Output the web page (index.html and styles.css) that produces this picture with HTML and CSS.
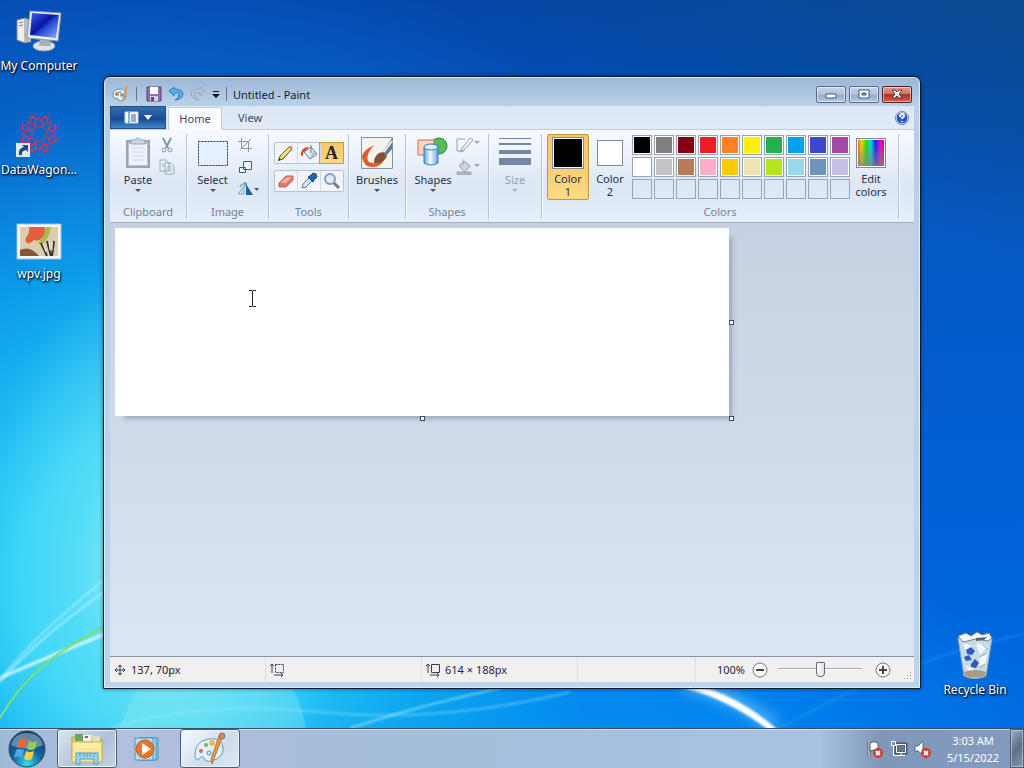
FILE: index.html
```
<!DOCTYPE html>
<html lang="en">
<head>
    <meta charset="UTF-8">
    <meta name="viewport" content="width=device-width, initial-scale=1.0">
    <title>Untitled - Paint</title>
    <link rel="stylesheet" href="styles.css">
</head>
<body>
    <main class="desktop">
        <svg class="wallpaper" viewBox="0 0 1024 728" preserveAspectRatio="none" aria-hidden="true">
            <defs>
                <filter id="soft" x="-20%" y="-20%" width="140%" height="140%"><feGaussianBlur stdDeviation="1"/></filter>
                <filter id="haze" x="-50%" y="-50%" width="200%" height="200%"><feGaussianBlur stdDeviation="7"/></filter>
            </defs>
            <path d="M120 728 Q150 640 210 640 Q290 645 306 728Z" fill="#9df0ee" opacity=".3"/>
            <path d="M0 680 Q30 640 104 580" fill="none" stroke="#d4fbff" stroke-width="2" opacity=".5" filter="url(#soft)"/>
            <path d="M0 682 Q36 640 104 592" fill="none" stroke="#c8fbff" stroke-width="2" opacity=".7" filter="url(#soft)"/>
            <path d="M0 678 Q50 656 110 632" fill="none" stroke="#e4fbff" stroke-width="3" opacity=".85" filter="url(#soft)"/>
            <path d="M0 718 Q32 660 110 624" fill="none" stroke="#7fdc70" stroke-width="2"/>
            <path d="M112 728 Q200 700 320 712 T570 692" fill="none" stroke="#a5edff" stroke-width="3" opacity=".3" filter="url(#soft)"/>
            <path d="M350 728 Q430 702 520 684" fill="none" stroke="#b0f2ff" stroke-width="2" opacity=".6" filter="url(#soft)"/>
            <path d="M680 682 Q730 692 776 728" fill="none" stroke="#9fe0ff" stroke-width="14" opacity=".5" filter="url(#haze)"/>
            <path d="M682 682 Q732 690 778 730 L770 731 Q728 699 684 688Z" fill="#fff" filter="url(#soft)"/>
            <path d="M780 728 Q900 660 1024 634" fill="none" stroke="#42b3ff" stroke-width="3" opacity=".2" filter="url(#soft)"/>
        </svg>

        <nav class="shortcuts" aria-label="Desktop">
            <a class="shortcut" href="#computer">
                <svg width="46" height="46" viewBox="0 0 46 46" aria-hidden="true">
                    <defs><linearGradient id="screen" x2="1" y2="1"><stop stop-color="#3f62e8"/><stop offset=".45" stop-color="#0814a4"/><stop offset=".55" stop-color="#2445d0"/><stop offset="1" stop-color="#8fb4ff"/></linearGradient></defs>
                    <path d="M1 12l8-2v25l-8-3z" fill="#eef0f2" stroke="#81868b"/><path d="M9 10l6 2v22l-6 1z" fill="#b5bac0"/>
                    <path d="M3 15l4-1M3 18l4-1" stroke="#777"/>
                    <ellipse cx="28" cy="38" rx="11" ry="5" fill="#dfe3e6" stroke="#9ba4ac"/>
                    <path d="M24 30h9l2 8H23z" fill="#aab1b8"/>
                    <path d="M14 3l31 2-3 28-31-3z" fill="#e9edf1" stroke="#8c99a6"/><path d="M16 5l27 2-3 23-26-3z" fill="url(#screen)"/>
                </svg>
                <span>My Computer</span>
            </a>
            <a class="shortcut" href="#datawagon">
                <svg width="46" height="46" viewBox="0 0 46 46" aria-hidden="true">
                    <defs><g id="petal"><path d="M23 15L14 9l5-7M23 15l9-6-5-7M14 9l2-5M32 9l-2-5M19 13l4-8 4 8"/></g></defs>
                    <g fill="none" stroke="#c23a62">
                        <use href="#petal"/>
                        <use href="#petal" transform="rotate(45 23 22)"/>
                        <use href="#petal" transform="rotate(90 23 22)"/>
                        <use href="#petal" transform="rotate(135 23 22)"/>
                        <use href="#petal" transform="rotate(180 23 22)"/>
                        <use href="#petal" transform="rotate(225 23 22)"/>
                        <use href="#petal" transform="rotate(270 23 22)"/>
                        <use href="#petal" transform="rotate(315 23 22)"/>
                        <circle cx="23" cy="22" r="7" stroke-dasharray="3 1"/>
                    </g>
                    <path d="M0 31h14v14H0z" fill="#dcebf8"/><path d="M3 43q-1-7 5-8l-2-2h6v7l-2-2q-5 1-4 5z" fill="#164c8a"/>
                </svg>
                <span>DataWagon...</span>
            </a>
            <a class="shortcut" href="#wpv">
                <svg width="46" height="46" viewBox="0 0 46 46" aria-hidden="true">
                    <path d="M1 8h44v35H1z" fill="#f6f6f3" stroke="#a8c3d5"/><path d="M4 11h38v29H4z" fill="#dccdb0"/>
                    <path d="M13 11h15q3 5-2 11-4 4-8 2-3 4-7 3-3-3 0-7 3-3 2-9z" fill="#e2603a"/>
                    <path d="M28 11h7q-1 11-10 18l-3-2 4-5q5-5 2-11z" fill="#a3bd48"/>
                    <path d="M4 34q10-5 19 6H4z" fill="#85573a"/>
                    <path d="M25 27l6 13M31 25l4 15M38 25l-2 15" stroke="#3b312b" stroke-width="2"/><path d="M27 28l3 8M33 26l1 8M36 26v8" stroke="#f7f3ec"/>
                </svg>
                <span>wpv.jpg</span>
            </a>
        </nav>

        <a class="shortcut recycle" href="#recycle">
            <svg width="46" height="52" viewBox="0 0 46 52" aria-hidden="true">
                <path d="M6 8h34l-6 38q-11 5-22 0z" fill="#c8dae7" stroke="#8fa6b6"/>
                <path d="M6 6l8-3 5 3 6-4 5 3 7-2 3 5-4 3-12-2-13 3z" fill="#f5f8fa" stroke="#78828a"/>
                <path d="M24 8l11-1-3 3-8 1z" fill="#59616a"/>
                <path d="M11 13l9 3-5 9zM24 13l12 3-8 9zM28 27l8-5-3 12-7 3zM14 36l8 2-4 6z" fill="#f4fbff" opacity=".9"/>
                <path d="M31 15l5 4M28 27l7-4M27 38l6-4" stroke="#8fa3b2"/>
                <path d="M12 42q11-4 22 0l-1 4q-11 3-20 0z" fill="#a79c84"/>
                <path d="M14 20l5-3 4 4-3 4-5-1zM14 31l-2-4 5-2 3 5zM19 34l4-5 4 4-3 5-5-1z" fill="#3158bd"/>
            </svg>
            <span>Recycle Bin</span>
        </a>

        <section class="window" aria-label="Untitled - Paint">
            <header class="titlebar">
                <svg class="app-icon" width="18" height="18" viewBox="0 0 18 18" aria-hidden="true">
                    <path d="M1 10q0-6 7-6 6 0 6 6 0 5-5 6-3 0-3-2t-3 0q-2-1-2-4z" fill="#e9f4fb" stroke="#4b91b8"/>
                    <circle cx="5" cy="9" r="2" fill="#e66a42"/><circle cx="8" cy="7" r="1" fill="#49a33c"/><circle cx="10" cy="10" r="2" fill="#4fa9e2"/><path d="M15 1l-4 15" stroke="#e9933b" stroke-width="2"/>
                </svg>
                <span class="bar"></span>
                <button class="quick" aria-label="Save"><svg width="16" height="16" viewBox="0 0 16 16"><path d="M1 1h14v14H1z" fill="#8b6fae" stroke="#59417b"/><path d="M4 1h8v7H4z" fill="#fff"/><path d="M4 10h8v5H4z" fill="#d2d2e8"/><path d="M5 11h3v4H5z" fill="#5b4a7b"/></svg></button>
                <button class="quick" aria-label="Undo"><svg width="16" height="16" viewBox="0 0 16 16"><path d="M6 1L1 5l5 5V7q5-1 5 2 0 3-4 5 7 0 8-6 0-5-9-5z" fill="#4eb1eb" stroke="#297dbd"/></svg></button>
                <button class="quick" aria-label="Redo" disabled><svg width="16" height="16" viewBox="0 0 16 16"><path d="M10 1l5 4-5 5V7Q5 6 5 9q0 3 4 5-7 0-8-6 0-5 9-5z" fill="#b2c2d4" stroke="#93a9bf"/></svg></button>
                <button class="quick" aria-label="Customize Quick Access Toolbar"><svg width="8" height="10" viewBox="0 0 8 10"><path d="M1 2h6v1H1zM0 5h8L4 9z" fill="#111"/></svg></button>
                <span class="bar"></span>
                <h1 class="title">Untitled - Paint</h1>
                <div class="controls">
                    <button aria-label="Minimize"><svg width="12" height="10" viewBox="0 0 12 10"><path d="M1 5h10v4H1z" fill="#fff" stroke="#49546a"/></svg></button>
                    <button aria-label="Maximize"><svg width="12" height="10" viewBox="0 0 12 10"><path d="M1 1h10v8H1z" fill="#fff" stroke="#49546a"/><path d="M4 4h4v2H4z" fill="#9cb2cf" stroke="#49546a"/></svg></button>
                    <button class="close" aria-label="Close"><svg width="12" height="10" viewBox="0 0 12 10"><path d="M1 1h3l2 2 2-2h3L8 5l3 4H8L6 7 4 9H1l3-4z" fill="#fff" stroke="#513941"/></svg></button>
                </div>
            </header>

            <div class="tabs">
                <button class="file" aria-label="Paint menu"><svg width="28" height="14" viewBox="0 0 28 14"><path d="M1 1h13v11H1z" fill="#fff" stroke="#bdd5f2"/><path d="M5 1v11M7 4h5M7 6h5M7 8h5M7 10h5" stroke="#2a62a6"/><path d="M20 4h8l-4 5z" fill="#fff"/></svg></button>
                <button class="tab active">Home</button>
                <button class="tab">View</button>
                <button class="help" aria-label="Help"><svg width="14" height="14" viewBox="0 0 14 14"><circle cx="7" cy="7" r="6" fill="#2b57c7" stroke="#fff"/><circle cx="7" cy="7" r="6.5" fill="none" stroke="#6480bd"/><path d="M5 6q0-3 2-3t2 2q0 1-2 2v1M7 10v1" fill="none" stroke="#fff" stroke-width="2"/></svg></button>
            </div>

            <div class="ribbon">
                <div class="group">
                    <div class="tools">
                        <button class="big">
                            <svg width="34" height="34" viewBox="0 0 34 34" aria-hidden="true"><path d="M6 5h22v26H6z" fill="#b9c4d5" stroke="#97a5ba" stroke-width="2"/><path d="M8 8h18v21H8z" fill="#edf3fb"/><path d="M11 12h12M11 16h12M11 20h12M11 24h12" stroke="#ccd7e7"/><path d="M10 7V4h4q3-4 6 0h4v4H10z" fill="#cbd5e2" stroke="#96a6bc"/></svg>
                            <span>Paste</span><i class="arrow"></i>
                        </button>
                        <div class="stack">
                            <button aria-label="Cut" disabled><svg width="16" height="16" viewBox="0 0 16 16"><path d="M4 1l5 10M12 1L7 11" stroke="#8494ab" stroke-width="2"/><circle cx="5" cy="13" r="2" fill="none" stroke="#8494ab"/><circle cx="11" cy="13" r="2" fill="none" stroke="#8494ab"/></svg></button>
                            <button aria-label="Copy" disabled><svg width="16" height="16" viewBox="0 0 16 16"><path d="M1 1h6l3 3v8H1zM6 4h6l3 3v8H6z" fill="#eaf0f8" stroke="#9ba9bb"/><path d="M3 5h3M3 7h3M8 8h5M8 10h5M8 12h5" stroke="#abb8c9"/></svg></button>
                        </div>
                    </div>
                    <h2>Clipboard</h2>
                </div>
                <div class="group">
                    <div class="tools">
                        <button class="big">
                            <svg width="34" height="34" viewBox="0 0 34 34" aria-hidden="true"><path d="M2.500 5.500h29v24h-29z" fill="#e4f0ff" stroke="#20375c" stroke-dasharray="2 1"/></svg>
                            <span>Select</span><i class="arrow"></i>
                        </button>
                        <div class="stack three">
                            <button aria-label="Crop" disabled><svg width="14" height="14" viewBox="0 0 14 14"><path d="M3.500 0v10.500H14M0 3.500h10.500V14M2 12L13 1" fill="none" stroke="#8997aa"/></svg></button>
                            <button aria-label="Resize"><svg width="14" height="14" viewBox="0 0 14 14"><path d="M5.500 1.500h8v8h-8zM1.500 7.500h6v5h-6z" fill="#f4faff" stroke="#2f6283"/></svg></button>
                            <button aria-label="Rotate"><svg width="22" height="14" viewBox="0 0 22 14"><path d="M0 12l6-8v8z" fill="#c4e0f2" stroke="#76a9cb"/><path d="M8 2v11h7z" fill="#176796"/><path d="M2 5q1-4 6-3M6 0l3 2-3 2" fill="none" stroke="#3486c3"/><path d="M16 6h5l-2 3z" fill="#4b5669"/></svg></button>
                        </div>
                    </div>
                    <h2>Image</h2>
                </div>
                <div class="group">
                    <div class="tools palette-tools">
                        <div class="tool-row">
                            <button aria-label="Pencil"><svg width="18" height="18" viewBox="0 0 18 18"><path d="M2 16l1-4 9-9 3 2-9 10z" fill="#efd968" stroke="#5b572b"/><path d="M12 3l3 2 1-1-2-3z" fill="#ec9d86"/><path d="M4 12l9-8" stroke="#fff4a4"/><path d="M1 17l1-3 2 2z" fill="#333"/></svg></button>
                            <button aria-label="Fill with color"><svg width="18" height="18" viewBox="0 0 18 18"><path d="M4 8l7-5 6 7-7 5z" fill="#e6edf4" stroke="#64788c"/><path d="M11 1v8" stroke="#64788c"/><path d="M10 14l6-4-3-3z" fill="#b0c4d7"/><path d="M9 3Q1 3 1 11q1 2 2 0 0-4 2-4z" fill="#d74133"/></svg></button>
                            <button class="picked" aria-label="Text"><b>A</b></button>
                        </div>
                        <div class="tool-row">
                            <button aria-label="Eraser"><svg width="18" height="18" viewBox="0 0 18 18"><path d="M2 11l7-7h7v4l-7 7H2z" fill="#e5786e" stroke="#bd6660"/><path d="M3 11l7-6h5l-6 6z" fill="#f6aca1"/></svg></button>
                            <button aria-label="Color picker"><svg width="18" height="18" viewBox="0 0 18 18"><path d="M2 16l1-4 6-6 3 3-6 6z" fill="#d6eaf5" stroke="#5c7891"/><path d="M8 5l2-1 3-3q4 0 4 4l-3 3-1 2z" fill="#1d65ae" stroke="#174981"/></svg></button>
                            <button aria-label="Magnifier"><svg width="18" height="18" viewBox="0 0 18 18"><circle cx="7" cy="7" r="5" fill="#d8effb" stroke="#8f9aa8" stroke-width="2"/><path d="M11 11l5 5" stroke="#7f7974" stroke-width="3"/></svg></button>
                        </div>
                    </div>
                    <h2>Tools</h2>
                </div>
                <div class="group">
                    <div class="tools">
                        <button class="big">
                            <svg width="34" height="34" viewBox="0 0 34 34" aria-hidden="true"><path d="M1.500 1.500h31v31h-31z" fill="#f5f1eb" stroke="#8192a8"/><path d="M14 9Q2 15 2 21q2 11 12 10 7-1 10-7-9 5-15 2Q4 21 14 9z" fill="#e15a28"/><path d="M14 27q0-10 9-11l4 4q-3 8-13 7z" fill="#865138"/><path d="M23 16L32 2v11l-6 7z" fill="#6e7788"/><path d="M24 16l8-11" stroke="#e8edf4" stroke-width="2"/></svg>
                            <span>Brushes</span><i class="arrow"></i>
                        </button>
                    </div>
                </div>
                <div class="group">
                    <div class="tools">
                        <button class="big">
                            <svg width="34" height="34" viewBox="0 0 34 34" aria-hidden="true"><defs><linearGradient id="tube"><stop stop-color="#61a4dc"/><stop offset=".45" stop-color="#f5fbff"/><stop offset="1" stop-color="#63a4dd"/></linearGradient></defs><circle cx="23" cy="10" r="8" fill="#56bb54" stroke="#288b3c"/><path d="M2 4h16v15H2z" fill="#ffd3bf" stroke="#da6646"/><path d="M8 11v16q7 4 14 0V11" fill="url(#tube)" stroke="#307db8"/><ellipse cx="15" cy="11" rx="7" ry="3" fill="#dff3ff" stroke="#307db8"/></svg>
                            <span>Shapes</span><i class="arrow"></i>
                        </button>
                        <div class="stack">
                            <button aria-label="Outline" disabled><svg width="24" height="16" viewBox="0 0 24 16"><path d="M9 2H1v12h7M5 13L14 1l3 2L8 13l-4 2z" fill="none" stroke="#929ead"/><path d="M18 4h6l-3 3z" fill="#9ca8b8"/></svg></button>
                            <button aria-label="Fill" disabled><svg width="24" height="16" viewBox="0 0 24 16"><path d="M3 7l5-5 6 5-5 6z" fill="#ccd5df" stroke="#929ead"/><path d="M7 0v6M1 13h14v3H1z" fill="#abb5c2" stroke="#a1adba"/><path d="M18 5h6l-3 3z" fill="#9ca8b8"/></svg></button>
                        </div>
                    </div>
                    <h2>Shapes</h2>
                </div>
                <div class="group">
                    <div class="tools">
                        <button class="big" disabled>
                            <svg width="34" height="34" viewBox="0 0 34 34" aria-hidden="true"><path d="M1 2h32v1H1zM1 7h32v2H1zM1 14h32v4H1zM1 22h32v7H1z" fill="#7585a4"/></svg>
                            <span>Size</span><i class="arrow"></i>
                        </button>
                    </div>
                </div>
                <div class="group">
                    <div class="tools colors">
                        <button class="color-slot selected"><i class="swatch black"></i><span>Color<br>1</span></button>
                        <button class="color-slot"><i class="swatch white"></i><span>Color<br>2</span></button>
                        <div class="palette">
                            <button class="c-black" aria-label="Black"></button>
                            <button class="c-gray" aria-label="Gray-50%"></button>
                            <button class="c-darkred" aria-label="Dark red"></button>
                            <button class="c-red" aria-label="Red"></button>
                            <button class="c-orange" aria-label="Orange"></button>
                            <button class="c-yellow" aria-label="Yellow"></button>
                            <button class="c-green" aria-label="Green"></button>
                            <button class="c-turquoise" aria-label="Turquoise"></button>
                            <button class="c-indigo" aria-label="Indigo"></button>
                            <button class="c-purple" aria-label="Purple"></button>
                            <button class="c-white" aria-label="White"></button>
                            <button class="c-silver" aria-label="Gray-25%"></button>
                            <button class="c-brown" aria-label="Brown"></button>
                            <button class="c-rose" aria-label="Rose"></button>
                            <button class="c-gold" aria-label="Gold"></button>
                            <button class="c-cream" aria-label="Light yellow"></button>
                            <button class="c-lime" aria-label="Lime"></button>
                            <button class="c-sky" aria-label="Light turquoise"></button>
                            <button class="c-bluegray" aria-label="Blue-gray"></button>
                            <button class="c-lavender" aria-label="Lavender"></button>
                            <button class="empty" aria-label="Custom 1"></button>
                            <button class="empty" aria-label="Custom 2"></button>
                            <button class="empty" aria-label="Custom 3"></button>
                            <button class="empty" aria-label="Custom 4"></button>
                            <button class="empty" aria-label="Custom 5"></button>
                            <button class="empty" aria-label="Custom 6"></button>
                            <button class="empty" aria-label="Custom 7"></button>
                            <button class="empty" aria-label="Custom 8"></button>
                            <button class="empty" aria-label="Custom 9"></button>
                            <button class="empty" aria-label="Custom 10"></button>
                        </div>
                        <button class="color-slot edit"><i class="swatch rainbow"></i><span>Edit<br>colors</span></button>
                    </div>
                    <h2>Colors</h2>
                </div>
            </div>

            <div class="workspace">
                <div class="canvas">
                    <i class="handle right"></i>
                    <i class="handle bottom"></i>
                    <i class="handle corner"></i>
                    <svg class="cursor" width="9" height="17" viewBox="0 0 9 17" aria-hidden="true"><path d="M1 .5h3l.5 1 .5-1h3M4.500 1v15M1 16.500h3l.5-1 .5 1h3" fill="none" stroke="#222"/></svg>
                </div>
            </div>

            <footer class="status">
                <div class="cell"><svg width="12" height="12" viewBox="0 0 12 12" aria-hidden="true"><path d="M6 1v10M1 6h10M4 3l2-2 2 2M4 9l2 2 2-2M3 4L1 6l2 2M9 4l2 2-2 2" fill="none" stroke="#333b48"/></svg><span>137, 70px</span></div>
                <div class="cell"><svg width="14" height="14" viewBox="0 0 14 14" aria-hidden="true"><path d="M2 10V2M0 3l2-2 2 2M4 12h9M11 10l2 2-2 2" fill="none" stroke="#35404e"/><path d="M5.500 1.500h8v8h-8z" fill="none" stroke="#35404e" stroke-dasharray="2 1"/></svg></div>
                <div class="cell"><svg width="14" height="14" viewBox="0 0 14 14" aria-hidden="true"><path d="M2 10V2M0 3l2-2 2 2M4 12h9M11 10l2 2-2 2M5.500 1.500h8v8h-8z" fill="none" stroke="#35404e"/></svg><span>614 × 188px</span></div>
                <div class="cell"></div>
                <div class="zoom">
                    <label for="zoom">100%</label>
                    <button aria-label="Zoom out"><svg width="16" height="16" viewBox="0 0 16 16"><circle cx="8" cy="8" r="7" fill="#f8f8f8" stroke="#777"/><path d="M4 8h8" stroke="#444" stroke-width="2"/></svg></button>
                    <input id="zoom" type="range" min="0" max="100" value="50">
                    <button aria-label="Zoom in"><svg width="16" height="16" viewBox="0 0 16 16"><circle cx="8" cy="8" r="7" fill="#f8f8f8" stroke="#777"/><path d="M4 8h8M8 4v8" stroke="#444" stroke-width="2"/></svg></button>
                </div>
                <svg class="grip" width="8" height="8" viewBox="0 0 8 8" aria-hidden="true"><path d="M6 0h1v1H6zM3 3h1v1H3zM6 3h1v1H6zM0 6h1v1H0zM3 6h1v1H3zM6 6h1v1H6z" fill="#999"/></svg>
            </footer>
        </section>
    </main>

    <footer class="taskbar">
        <button class="start" aria-label="Start">
            <svg width="38" height="38" viewBox="0 0 38 38">
                <defs><radialGradient id="orb" cx=".5" cy=".9" r=".9"><stop stop-color="#35dcf0"/><stop offset=".45" stop-color="#12649d"/><stop offset="1" stop-color="#163c61"/></radialGradient></defs>
                <circle cx="19" cy="19" r="18" fill="url(#orb)" stroke="#264d71"/><path d="M3 15Q6 3 19 3t16 12q-15 7-32 0z" fill="#d3e8f5" opacity=".4"/>
                <path d="M11 10q4-3 8 0l-2 8q-4-2-8 0z" fill="#ed6534"/><path d="M21 11q4 2 8 0l-2 8q-4 2-8 0z" fill="#95cb4e"/><path d="M8 20q4-2 8 0l-2 8q-4-3-8 0z" fill="#55a7e6"/><path d="M18 21q4 2 8 0l-2 8q-4 2-8 0z" fill="#fbd142"/>
            </svg>
        </button>
        <button class="task open" aria-label="Windows Explorer">
            <svg width="36" height="34" viewBox="0 0 36 34"><path d="M3 5h9l2 3h19v19H3z" fill="#e9c969" stroke="#b89b4d"/><path d="M6 2h8v7H6z" fill="#6cab54"/><path d="M14 3h8v6h-8z" fill="#f4f5ee"/><path d="M16 4h3v2h-3z" fill="#ce482f"/><path d="M23 4h8v6h-8z" fill="#e3e1bc"/><path d="M3 10h30v20H3z" fill="#f8e795" stroke="#ccb45d"/><path d="M5 12h26M5 15h26" stroke="#fff9c5"/><path d="M7 32V21h22v11h-4v-5H11v5z" fill="#9ad7ed" stroke="#51a2c2"/><path d="M11 21v4M15 21v4M18 21v4M21 21v4M25 21v4" stroke="#4f9dbc"/></svg>
        </button>
        <button class="task" aria-label="Windows Media Player">
            <svg width="26" height="28" viewBox="0 0 26 28"><path d="M6 3h18v22H6z" fill="#8bc9e8" stroke="#4b98c1"/><path d="M4 3h18v22H4z" fill="#a3d9f0" stroke="#4b98c1"/><path d="M1 3h18v22H1z" fill="#b4dff3" stroke="#4b98c1"/><circle cx="11" cy="14" r="9" fill="#e77525" stroke="#c95b18"/><path d="M8 8l9 6-9 6z" fill="#fff"/></svg>
        </button>
        <button class="task open current" aria-label="Paint">
            <svg width="36" height="34" viewBox="0 0 36 34"><path d="M3 24q-1-14 13-17 14-2 15 9 1 10-12 13-6 1-7-3-2-3-5 1-4 3-4-3z" fill="#e2f1f8" stroke="#5d9dbc"/><circle cx="9" cy="19" r="2" fill="#d8644e"/><circle cx="14" cy="13" r="2" fill="#7ab650"/><circle cx="20" cy="11" r="3" fill="#eabb4d"/><circle cx="17" cy="21" r="2" fill="#d4eefb" stroke="#4b91b8"/><path d="M30 6L20 32l-1-5 8-23z" fill="#e39948" stroke="#b7783b"/><circle cx="30" cy="4" r="3" fill="#c78a68" stroke="#a06b50"/></svg>
        </button>
        <div class="tray">
            <button aria-label="Action Center"><svg width="18" height="18" viewBox="0 0 18 18"><path d="M3 1v16" stroke="#4d5866" stroke-width="3"/><path d="M3 1v16" stroke="#fff"/><path d="M4 3q4-3 8 0v8q-4-2-8 0z" fill="#fff" stroke="#4d5866"/><circle cx="12" cy="13" r="5" fill="#d8372f"/><path d="M10 11l4 4M14 11l-4 4" stroke="#fff" stroke-width="2"/></svg></button>
            <button aria-label="Network"><svg width="18" height="18" viewBox="0 0 18 18"><path d="M6 4h10v9H6z" fill="#627994" stroke="#4d5866" stroke-width="3"/><path d="M6.500 4.500h9v8h-9zM11 13v3M7 15.500h8M3.500 6v9.500H8M1.500 1.500h4v4h-4z" fill="none" stroke="#fff"/></svg></button>
            <button aria-label="Volume"><svg width="18" height="18" viewBox="0 0 18 18"><path d="M1 6h3l5-5v14l-5-4H1z" fill="#fff" stroke="#5c6876"/><circle cx="12" cy="13" r="5" fill="#d8372f"/><path d="M10 11l4 4M14 11l-4 4" stroke="#fff" stroke-width="2"/></svg></button>
            <time class="clock" datetime="2022-05-15T03:03">3:03 AM<br>5/15/2022</time>
            <button class="show-desktop" aria-label="Show desktop"></button>
        </div>
    </footer>
</body>
</html>
```
FILE: styles.css
```
* {
    box-sizing: border-box;
}

body {
    margin: 0;
    height: 100vh;
    display: flex;
    flex-direction: column;
    overflow: hidden;
    font: 11px/13px "Noto Sans", "Open Sans", sans-serif;
    color: #26304a;
}

button {
    margin: 0;
    padding: 0;
    border: 0;
    background: none;
    font: inherit;
    color: inherit;
}

svg {
    display: block;
    flex: none;
}

h1, h2 {
    margin: 0;
    font: inherit;
}

/* Desktop */
.desktop {
    flex: 1;
    min-height: 0;
    position: relative;
    background:
        radial-gradient(ellipse 18% 42% at 16% 78%, rgba(190, 246, 244, 0.95), rgba(110, 228, 246, 0.65) 45%, transparent),
        radial-gradient(ellipse 62% 90% at 14% 80%, #2cd0f8 20%, rgba(14, 168, 240, 0.85) 48%, rgba(8, 130, 228, 0.4) 72%, transparent),
        radial-gradient(ellipse 50% 26% at 54% 100%, rgba(0, 158, 255, 0.8), transparent),
        linear-gradient(200deg, #0a4c92, transparent 24%),
        linear-gradient(to bottom, #0446ad, #0658c2 30%, #0062d8 70%, #0069df);
}

.wallpaper {
    position: absolute;
    inset: 0;
    width: 100%;
    height: 100%;
}

.shortcuts {
    position: relative;
    width: 78px;
    padding-top: 8px;
    display: grid;
    grid-auto-rows: 104px;
}

.shortcut {
    display: flex;
    flex-direction: column;
    align-items: center;
    gap: 4px;
    font-size: 12px;
    line-height: 16px;
    color: #fff;
    text-decoration: none;
    text-shadow: 1px 1px 2px #000, 0 1px 3px #001f50;
}

.recycle {
    position: absolute;
    right: 14px;
    bottom: 30px;
    width: 70px;
    gap: 0;
    white-space: nowrap;
}

/* Paint window */
.window {
    position: absolute;
    inset: 76px 103px 39px 103px;
    display: flex;
    flex-direction: column;
    padding: 0 6px 6px;
    border: 1px solid #101c2e;
    border-radius: 7px 7px 0 0;
    background: linear-gradient(to bottom, #9bb6d4, #b9cfe8 26px, #bcd4ec);
    box-shadow: inset 0 0 0 1px rgba(220, 248, 255, 0.8), 0 0 4px rgba(0, 0, 40, 0.5);
}

.titlebar {
    display: flex;
    align-items: center;
    height: 29px;
    padding: 5px 2px 0;
    gap: 6px;
    color: #151b2d;
}

.bar {
    width: 1px;
    height: 14px;
    background: #61758e;
}

.app-icon + .bar {
    margin-right: 3px;
}

.title {
    font-size: 11px;
}

.controls {
    display: flex;
    gap: 3px;
    margin-left: auto;
}

.controls button {
    display: grid;
    place-items: center;
    width: 30px;
    height: 17px;
    border: 1px solid #586a86;
    border-radius: 2px;
    background: linear-gradient(#c7d7ea, #abc0dc 50%, #8fa9cc 51%, #b6cce6);
    box-shadow: inset 0 0 0 1px rgba(255, 255, 255, 0.5);
}

.controls .close {
    border-color: #4e2227;
    background: linear-gradient(#df9a8f, #d17468 45%, #b53022 50%, #cc6252);
}

.tabs {
    display: flex;
    height: 24px;
    background: linear-gradient(#dbe6f5, #e2ebf8);
    border-bottom: 1px solid #c1cddd;
}

.file {
    display: grid;
    place-items: center;
    width: 56px;
    background: linear-gradient(#316daf, #1d529b 50%, #154489 51%, #3f86cd);
    border: 1px solid #204d83;
}

.tab {
    width: 54px;
    border: 1px solid transparent;
    color: #3c4862;
}

.tab.active {
    margin: 1px 1px -1px 2px;
    padding-bottom: 1px;
    border-color: #c2cddd;
    border-bottom: 0;
    border-radius: 2px 2px 0 0;
    background: #fafcff;
}

.help {
    margin: 0 5px 0 auto;
}

.ribbon {
    display: grid;
    grid-template-columns: 77px 82px 80px 57px 83px 53px 357px;
    padding: 4px 0 3px;
    background: linear-gradient(#f7faff, #e9f0f9 35%, #dce6f4 60%, #e6effb);
    border-bottom: 1px solid #a0afc3;
}

.group {
    display: flex;
    flex-direction: column;
    padding-bottom: 1px;
    border-right: 1px solid #b4c2d5;
    box-shadow: 1px 0 #f8fbff;
}

.group h2 {
    margin-top: 1px;
    color: #74829b;
    text-align: center;
}

.tools {
    display: flex;
    justify-content: center;
    gap: 4px;
    height: 70px;
}

.big {
    display: flex;
    flex-direction: column;
    align-items: center;
    padding-top: 2px;
    gap: 3px;
}

.arrow {
    width: 0;
    height: 0;
    border: 3px solid transparent;
    border-top-color: #475269;
    border-bottom: 0;
}

.big:disabled {
    color: #939eb0;
}

.big:disabled .arrow {
    border-top-color: #a9b2c1;
}

.stack {
    display: flex;
    flex-direction: column;
    gap: 6px;
    padding-top: 3px;
}

.stack.three {
    gap: 8px;
    padding-top: 4px;
    margin-left: 4px;
}

.palette-tools {
    flex-direction: column;
    align-items: center;
    justify-content: flex-start;
    gap: 6px;
    padding-top: 8px;
}

.tool-row {
    display: flex;
    border: 1px solid #b5c2d2;
    border-radius: 2px;
    background: #f1f5fb;
}

.tool-row button {
    display: grid;
    place-items: center;
    width: 22px;
    height: 20px;
}

.tool-row button + button {
    width: 23px;
    border-left: 1px solid #d1dae7;
}

.tool-row .picked {
    background: linear-gradient(#f5c76a, #ffd984);
    outline: 1px solid #c59b45;
    font: bold 18px/18px "Liberation Serif", serif;
    color: #252525;
}

/* Colors group */
.colors {
    justify-content: flex-start;
    gap: 0;
    padding-left: 5px;
}

.color-slot {
    display: flex;
    flex-direction: column;
    align-items: center;
    width: 42px;
    height: 66px;
    padding-top: 2px;
    gap: 3px;
    border: 1px solid transparent;
}

.color-slot.selected {
    border-color: #c29443;
    border-radius: 2px;
    background: linear-gradient(#f4c66c, #fad078 60%, #ffdc81);
}

.swatch {
    width: 32px;
    height: 32px;
    border: 1px solid #808a9a;
    box-shadow: inset 0 0 0 1px #fff;
}

.swatch.black {
    background: #000;
}

.swatch.white {
    width: 26px;
    height: 26px;
    margin: 3px;
    background: #fff;
}

.swatch.rainbow {
    width: 30px;
    height: 30px;
    margin: 1px;
    background: linear-gradient(transparent, #808080cc), linear-gradient(to right, #f50, #fd0, #1e0, #0de, #11f, #e0d, #f00);
}

.palette {
    display: grid;
    grid-template-columns: repeat(10, 20px);
    grid-auto-rows: 20px;
    gap: 2px;
    padding: 1px 0 0 1px;
}

.palette button {
    border: 1px solid #9ba4b1;
    box-shadow: inset 0 0 0 1px #fff;
}

.palette .empty {
    box-shadow: none;
}

.c-black { background: #000; }
.c-gray { background: #7f7f7f; }
.c-darkred { background: #880015; }
.c-red { background: #ed1c24; }
.c-orange { background: #ff7f27; }
.c-yellow { background: #fff200; }
.c-green { background: #22b14c; }
.c-turquoise { background: #00a2e8; }
.c-indigo { background: #3f48cc; }
.c-purple { background: #a349a4; }
.c-white { background: #fff; }
.c-silver { background: #c3c3c3; }
.c-brown { background: #b97a57; }
.c-rose { background: #ffaec9; }
.c-gold { background: #ffc90e; }
.c-cream { background: #efe4b0; }
.c-lime { background: #b5e61d; }
.c-sky { background: #99d9ea; }
.c-bluegray { background: #7092be; }
.c-lavender { background: #c8bfe7; }

/* Picture area */
.workspace {
    flex: 1;
    min-height: 0;
    padding: 5px;
    background: linear-gradient(#c6d0e2, #dce5f2);
}

.canvas {
    position: relative;
    width: 614px;
    height: 188px;
    background: #fff;
    box-shadow: 6px 6px 5px -3px #9ba8bb;
}

.handle {
    position: absolute;
    width: 5px;
    height: 5px;
    border: 1px solid #3e4a5c;
    background: #fff;
}

.handle.right {
    left: 100%;
    top: calc(50% - 2px);
}

.handle.bottom {
    left: calc(50% - 2px);
    top: 100%;
}

.handle.corner {
    left: 100%;
    top: 100%;
}

.cursor {
    position: absolute;
    left: 133px;
    top: 62px;
}

/* Status bar */
.status {
    display: grid;
    grid-template-columns: 156px 156px 156px 118px 1fr auto;
    height: 26px;
    border-top: 1px solid #8292a5;
    background: #f1eff0;
    font-size: 11px;
    color: #292532;
}

.cell {
    display: flex;
    align-items: center;
    gap: 5px;
    padding-left: 4px;
    border-right: 1px solid #dedfe3;
}

.zoom {
    display: flex;
    align-items: center;
    justify-content: flex-end;
    gap: 7px;
}

.zoom input {
    appearance: none;
    width: 84px;
    height: 16px;
    margin: 0 6px 0 3px;
    background: linear-gradient(transparent 6px, #a9adb1 6px, #a9adb1 7px, #fff 7px, #fff 8px, transparent 8px);
}

.zoom input::-webkit-slider-thumb {
    appearance: none;
    width: 9px;
    height: 15px;
    border: 1px solid #64696f;
    border-radius: 1px 1px 4px 4px;
    background: linear-gradient(to right, #fff, #dfe1e4);
}

.grip {
    align-self: end;
    margin: 0 2px 2px 13px;
}

/* Taskbar */
.taskbar {
    flex: none;
    display: flex;
    height: 40px;
    position: relative;
    border-top: 1px solid #394f68;
    background: linear-gradient(to right, #9eb9d7, #b2bfdd 12%, #a5bddb 35%, #a9c2e2 80%, #8097b8 86%, #829cc1);
    box-shadow: inset 0 1px rgba(220, 237, 255, 0.7);
}

.start {
    width: 54px;
    display: grid;
    place-items: center;
}

.task {
    width: 60px;
    display: grid;
    place-items: center;
    border: 1px solid transparent;
}

.task.open {
    margin-left: 3px;
    border-color: #495d76;
    border-radius: 3px;
    background: linear-gradient(135deg, #dae4ef, #afc1d8 60%, #c7d3e3);
    box-shadow: inset 0 0 0 1px #e8f4ff;
}

.task.current {
    background: linear-gradient(135deg, #f6faff, #cfdbea 60%, #e0e9f4);
}

.tray {
    display: flex;
    align-items: center;
    gap: 6px;
    margin-left: auto;
}

.clock {
    width: 70px;
    font-size: 11px;
    line-height: 17px;
    text-align: center;
    color: #fff;
}

.show-desktop {
    align-self: stretch;
    width: 14px;
    margin-left: -4px;
    border: 1px solid #4b5d74;
    background: linear-gradient(135deg, #9aabc1, #5d7088 50%, #8397b0);
    box-shadow: inset 0 0 0 1px rgba(220, 235, 250, 0.5);
}
```
